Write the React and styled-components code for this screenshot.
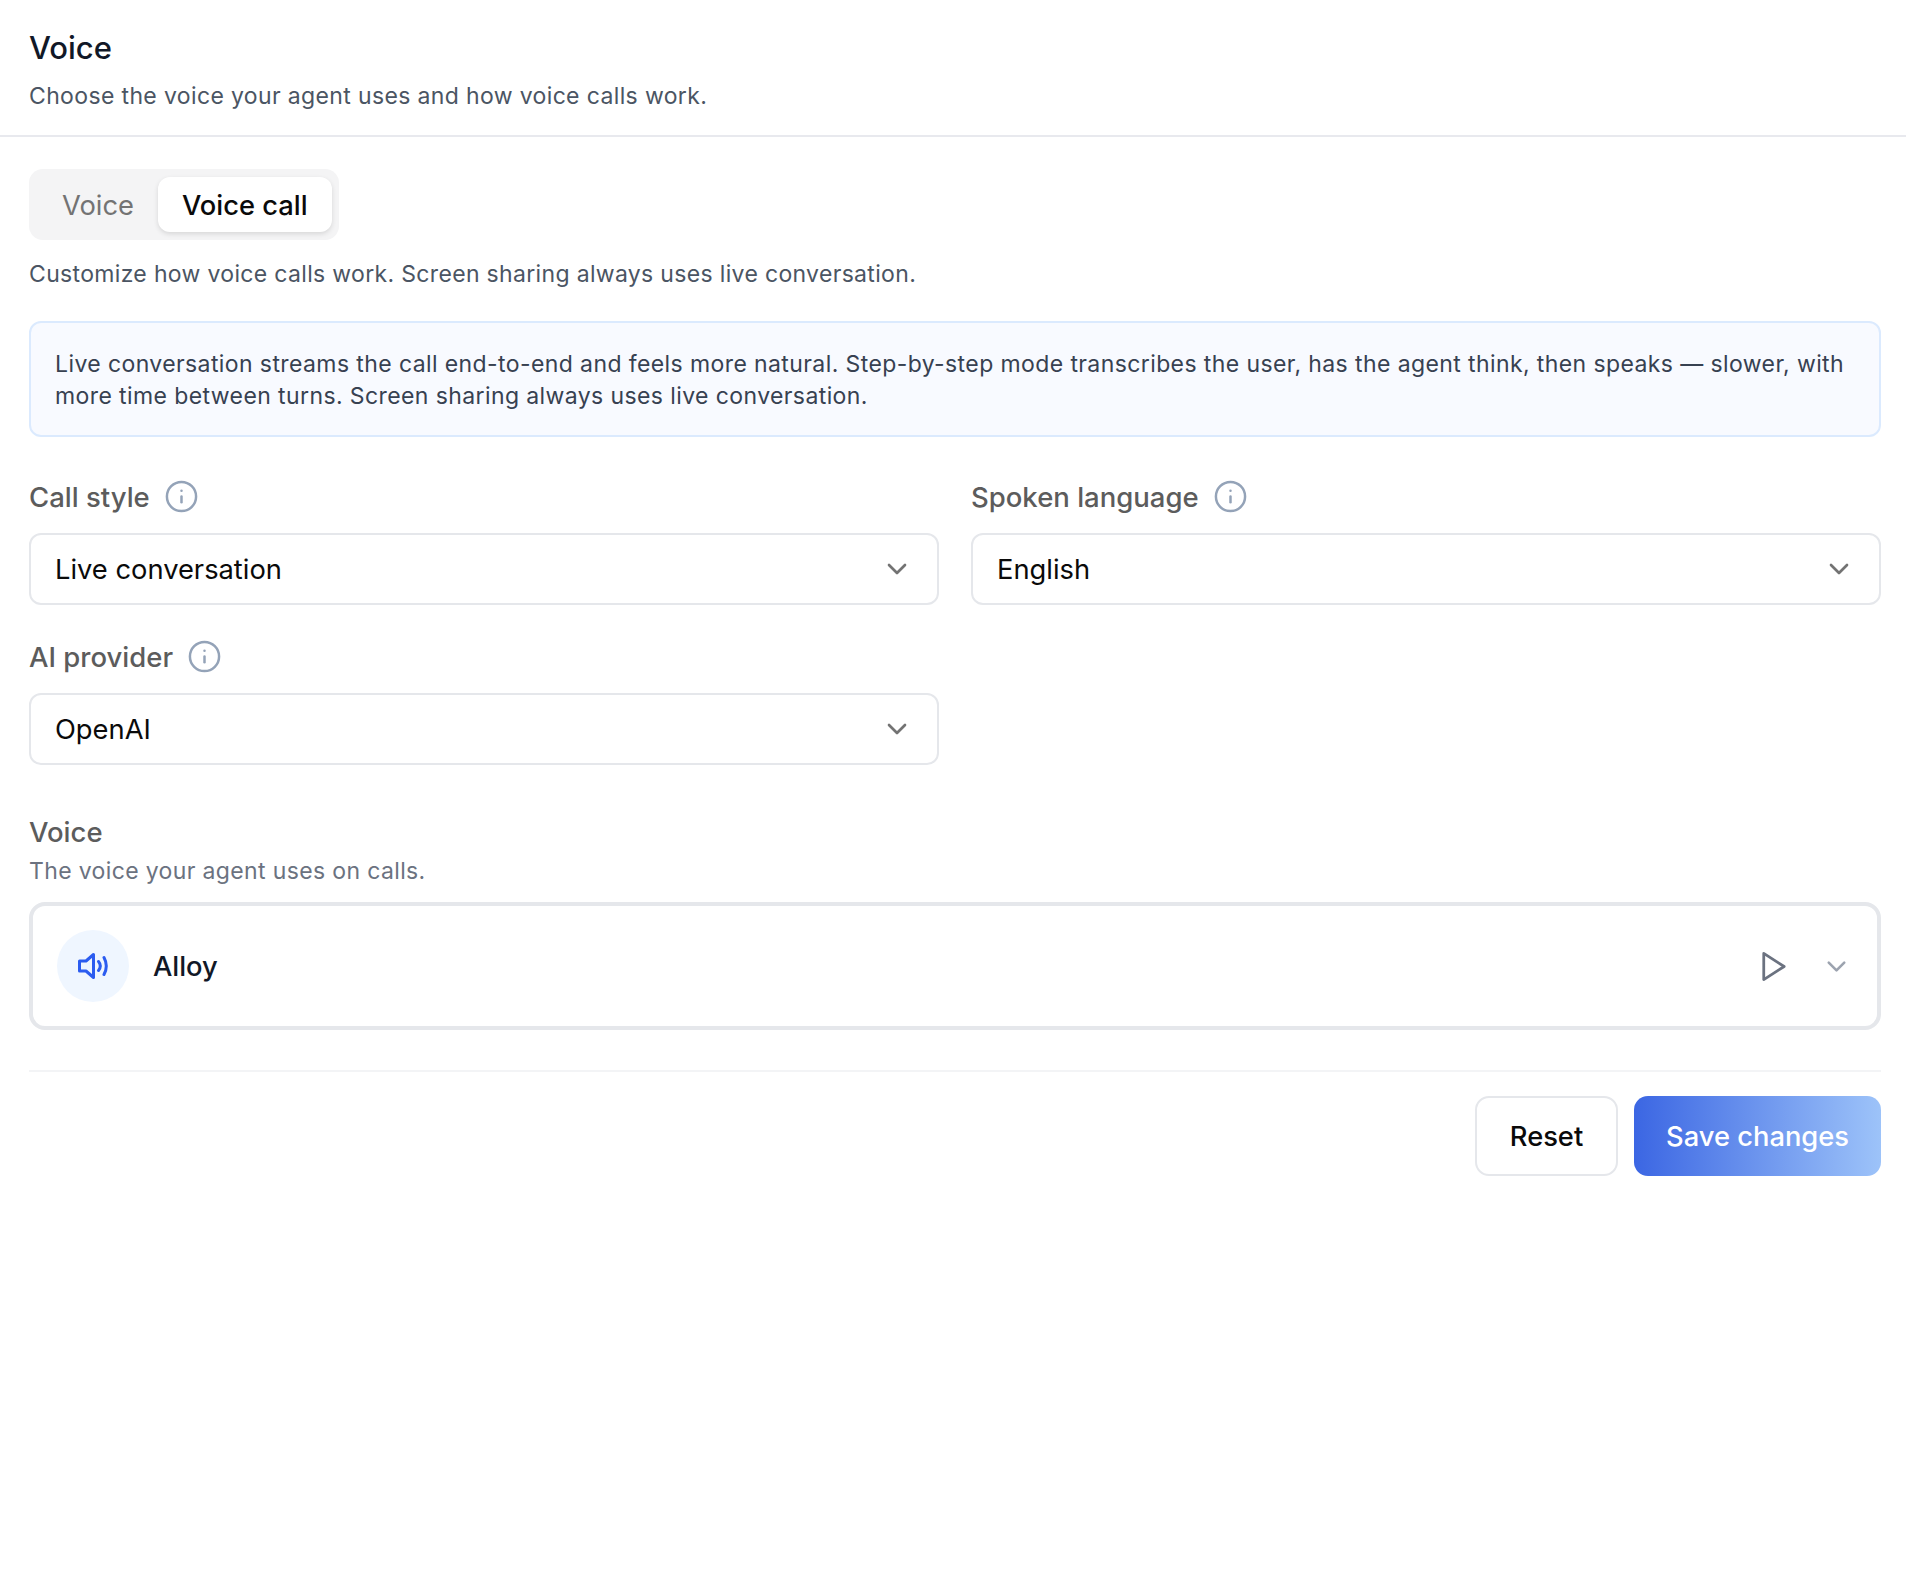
import React from "react";
import styled, { createGlobalStyle } from "styled-components";
import { ChevronDown, Info } from "lucide-react";

const Global = createGlobalStyle`
  html, body { margin: 0; background: #fff; }
  body { font-family: Inter, "Liberation Sans", sans-serif; -webkit-font-smoothing: antialiased; }
`;

const Page = styled.div`
  width: 1906px;
  height: 1586px;
  box-sizing: border-box;
  background: #fff;
`;

const Header = styled.header`
  height: 137px;
  box-sizing: border-box;
  padding: 29px 29px 0;
  border-bottom: 2px solid #e8e9ee;
`;

const Title = styled.h1`
  margin: 0;
  font-size: 31px;
  line-height: 38px;
  font-weight: 500;
  color: #111827;
`;

const Subtitle = styled.p`
  margin: 12px 0 0;
  font-size: 23px;
  line-height: 34px;
  letter-spacing: 0.36px;
  color: #4b5563;
`;

const Body = styled.main`
  padding: 32px 25px 0 29px;
  display: flex;
  flex-direction: column;
`;

const TabList = styled.div`
  align-self: flex-start;
  display: flex;
  padding: 8px 7px 8px 9px;
  border-radius: 14px;
  background: #f4f4f5;
`;

const Tab = styled.div`
  height: 55px;
  padding: 1px 24px 0;
  box-sizing: border-box;
  display: flex;
  align-items: center;
  border-radius: 12px;
  font-size: 27.3px;
  font-weight: ${(p) => (p.$active ? 500 : 400)};
  color: ${(p) => (p.$active ? "#0a0a0a" : "#737373")};
  background: ${(p) => (p.$active ? "#fff" : "transparent")};
  box-shadow: ${(p) => (p.$active ? "0 2px 5px rgba(0,0,0,.12)" : "none")};
`;

const Hint = styled.p`
  margin: 17px 0 0;
  font-size: 23px;
  line-height: 34px;
  letter-spacing: 0.33px;
  color: #4b5563;
`;

const Notice = styled.div`
  margin-top: 30px;
  height: 116px;
  box-sizing: border-box;
  padding: 25px 24px 0;
  border: 2px solid #dbeafe;
  border-radius: 12px;
  background: #f8faff;
  font-size: 23px;
  line-height: 32px;
  letter-spacing: 0.4px;
  color: #374151;
`;

const FieldGrid = styled.div`
  margin-top: 41px;
  display: grid;
  grid-template-columns: 1fr 1fr;
  column-gap: 32px;
  row-gap: 33px;
`;

const Field = styled.div`
  display: flex;
  flex-direction: column;
`;

const LabelRow = styled.div`
  height: 37px;
  display: flex;
  align-items: center;
  gap: 14px;
  margin-bottom: 18px;
`;

const Label = styled.span`
  font-size: 27.5px;
  font-weight: 500;
  color: #5c5c5c;
`;

const InfoIcon = styled(Info)`
  width: 35px;
  height: 35px;
  color: #94a3b8;
  stroke-width: 1.7;
`;

const Select = styled.div`
  height: 72px;
  box-sizing: border-box;
  padding: 0 24px;
  display: flex;
  align-items: center;
  justify-content: space-between;
  border: 2px solid #e5e7eb;
  border-radius: 12px;
  font-size: 27.3px;
  color: #0a0a0a;
`;

const SelectChevron = styled(ChevronDown)`
  width: 32px;
  height: 32px;
  color: #737373;
  stroke-width: 2;
`;

const VoiceSection = styled.section`
  margin-top: 49px;
`;

const VoiceTitle = styled.div`
  font-size: 27.5px;
  line-height: 37px;
  font-weight: 500;
  color: #5c5c5c;
`;

const VoiceHint = styled.p`
  margin: 3px 0 0;
  font-size: 23px;
  line-height: 34px;
  letter-spacing: 0.36px;
  color: #6b7280;
`;

const VoiceCard = styled.div`
  margin-top: 14px;
  height: 128px;
  box-sizing: border-box;
  padding: 0 24px;
  display: flex;
  align-items: center;
  border: 4px solid #e5e7eb;
  border-radius: 16px;
`;

const VoiceBadge = styled.div`
  width: 72px;
  height: 72px;
  flex: none;
  display: flex;
  align-items: center;
  justify-content: center;
  border-radius: 50%;
  background: #eff6ff;
  color: #2b5cf0;
`;

const VoiceName = styled.span`
  margin-left: 24px;
  flex: 1;
  font-size: 27.3px;
  font-weight: 500;
  color: #111827;
`;

const CardChevron = styled(ChevronDown)`
  margin-left: 31px;
  margin-right: 1px;
  width: 31px;
  height: 31px;
  color: #9ca3af;
  stroke-width: 2;
`;

const Footer = styled.footer`
  margin-top: 40px;
  padding-top: 24px;
  border-top: 2px solid #f3f4f6;
  display: flex;
  justify-content: flex-end;
  gap: 16px;
`;

const Button = styled.div`
  height: 80px;
  box-sizing: border-box;
  display: flex;
  align-items: center;
  justify-content: center;
  border-radius: 14px;
  font-size: 27.3px;
  font-weight: 500;
`;

const ResetButton = styled(Button)`
  width: 143px;
  border: 2px solid #e5e7eb;
  color: #0a0a0a;
`;

const SaveButton = styled(Button)`
  width: 247px;
  color: #fff;
  background: linear-gradient(90deg, #3b66e3 0%, #9dc3f9 100%);
`;

const SpeakerIcon = () => (
  <svg width="32" height="28" viewBox="0 0 32 28" fill="none" stroke="currentColor" strokeWidth="3" strokeLinecap="round" strokeLinejoin="round">
    <path d="M16.5 2.5 9 9H2.5v10H9l7.5 6.5Z" />
    <path d="M21.5 9.5q3.6 4.5 0 9" />
    <path d="M27 5.5q4.6 8.5 0 17" />
  </svg>
);

const PlayIcon = () => (
  <svg width="35" height="35" viewBox="0 0 24 24" fill="none" stroke="#6b7280" strokeWidth="1.9" strokeLinecap="round" strokeLinejoin="round">
    <polygon points="6 3 20 12 6 21" />
  </svg>
);

const fields = [
  { label: "Call style", value: "Live conversation" },
  { label: "Spoken language", value: "English" },
  { label: "AI provider", value: "OpenAI" },
];

export default function App() {
  return (
    <Page>
      <Global />
      <Header>
        <Title>Voice</Title>
        <Subtitle>Choose the voice your agent uses and how voice calls work.</Subtitle>
      </Header>
      <Body>
        <TabList>
          <Tab>Voice</Tab>
          <Tab $active>Voice call</Tab>
        </TabList>
        <Hint>Customize how voice calls work. Screen sharing always uses live conversation.</Hint>
        <Notice>
          Live conversation streams the call end-to-end and feels more natural. Step-by-step mode transcribes the
          user, has the agent think, then speaks — slower, with more time between turns. Screen sharing always uses
          live conversation.
        </Notice>
        <FieldGrid>
          {fields.map((f) => (
            <Field key={f.label}>
              <LabelRow>
                <Label>{f.label}</Label>
                <InfoIcon />
              </LabelRow>
              <Select>
                {f.value}
                <SelectChevron />
              </Select>
            </Field>
          ))}
        </FieldGrid>
        <VoiceSection>
          <VoiceTitle>Voice</VoiceTitle>
          <VoiceHint>The voice your agent uses on calls.</VoiceHint>
          <VoiceCard>
            <VoiceBadge>
              <SpeakerIcon />
            </VoiceBadge>
            <VoiceName>Alloy</VoiceName>
            <PlayIcon />
            <CardChevron />
          </VoiceCard>
        </VoiceSection>
        <Footer>
          <ResetButton>Reset</ResetButton>
          <SaveButton>Save changes</SaveButton>
        </Footer>
      </Body>
    </Page>
  );
}
